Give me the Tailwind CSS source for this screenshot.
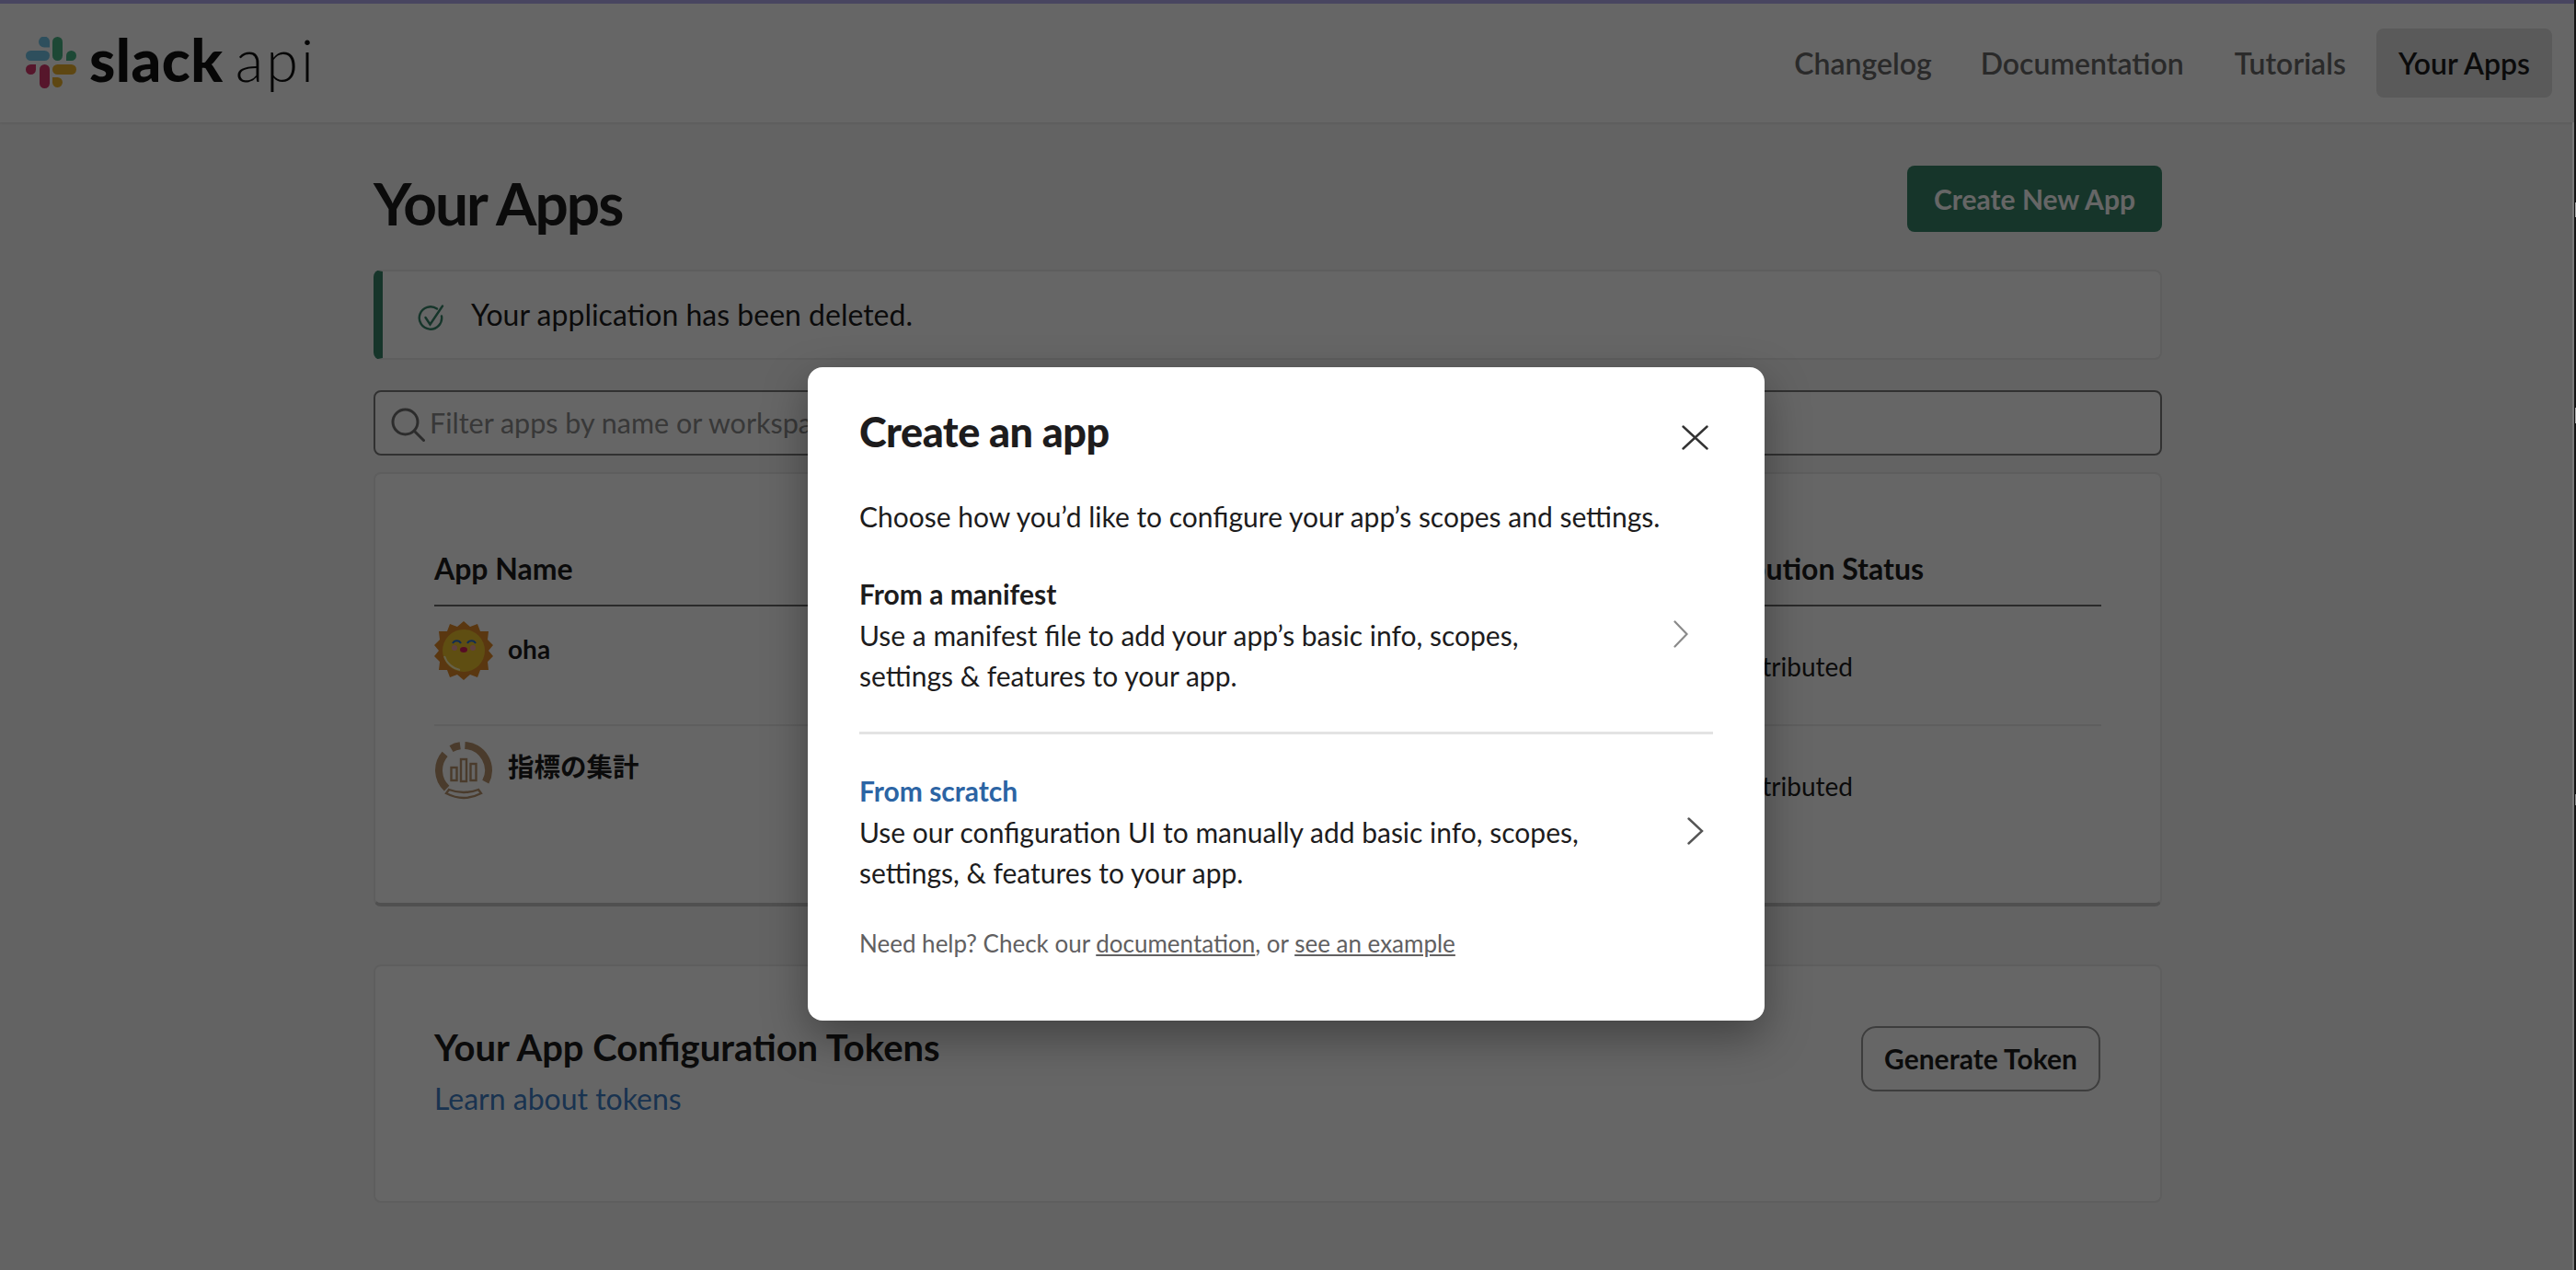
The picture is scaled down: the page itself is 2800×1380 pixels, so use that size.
<!DOCTYPE html>
<html lang="en">
<head>
  <meta charset="UTF-8">
  <title>Slack API: Applications</title>
  <script src="https://cdn.jsdelivr.net/npm/@tailwindcss/browser@4"></script>
</head>
<body class="relative h-[1380px] overflow-hidden bg-[#f8f8f8] font-['Lato','Noto_Sans_CJK_JP',sans-serif] text-[#1d1c1d]">
  <!-- top nav -->
  <header class="h-[133px] bg-white border-t-4 border-[#b5acf0] shadow-[0_1px_3px_rgba(0,0,0,0.12)] flex items-center justify-between pl-[28px] pr-[26px]">
    <a class="flex items-center">
      <svg class="w-[55px] h-[56px] mt-[-2px]" viewBox="0 0 55 56">
        <rect x="0" y="15" width="26" height="11" rx="5.5" fill="#74c6e8"/>
        <path d="M26 11.5V6a6 6 0 1 0-6 5.5z" fill="#74c6e8"/>
        <rect x="29" y="0" width="11" height="26" rx="5.5" fill="#4ab586"/>
        <path d="M44 26v-5.5a5.5 5.5 0 1 1 5.5 5.5z" fill="#4ab586"/>
        <rect x="15" y="30" width="11" height="26" rx="5.5" fill="#d6376c"/>
        <path d="M11 30v5.5A5.5 5.5 0 1 1 5.5 30z" fill="#d6376c"/>
        <rect x="29" y="30" width="26" height="11" rx="5.5" fill="#ecb22e"/>
        <path d="M29 44v6a5.5 5.5 0 1 0 5.5-6z" fill="#ecb22e"/>
      </svg>
      <span class="ml-[14px] text-[64px] leading-none font-black tracking-[0.5px] text-[#111] mt-[-8px]">slack</span>
      <span class="ml-[13px] text-[63px] leading-none font-light tracking-[3px] text-[#111] mt-[-8px]">api</span>
    </a>
    <nav class="flex items-center text-[32px] font-semibold text-[#6a6a6a]">
      <a class="mr-[53px]">Changelog</a>
      <a class="mr-[55px]">Documentation</a>
      <a class="mr-[33px]">Tutorials</a>
      <a class="flex items-center h-[75px] px-[24px] rounded-[8px] bg-[#e0e0e0] text-[#1d1c1d]">Your Apps</a>
    </nav>
  </header>

  <main class="w-[1944px] ml-[406px]">
    <div class="flex justify-between pt-[47px] h-[160px]">
      <h1 class="text-[64px] leading-[80px] mt-[1px] font-bold tracking-[-2px] text-[#1d1c1d]">Your Apps</h1>
      <a class="flex items-center justify-center w-[277px] h-[72px] rounded-[8px] bg-[#378569] text-white text-[30px] font-bold">Create New App</a>
    </div>

    <div class="flex items-center h-[98px] rounded-[8px] border-2 border-[#eaeaea] border-l-[10px] border-l-[#378569] bg-white pl-[38px]">
      <svg class="w-[29px] h-[29px] mt-[6px]" viewBox="0 0 29 29" fill="none" stroke="#378569" stroke-width="2.4" stroke-linecap="round">
        <path d="M26 12.5A12.2 12.2 0 1 1 21 4.5"/>
        <path d="M8.5 14l5 7.5L27 1.5"/>
      </svg>
      <span class="ml-[29px] text-[32px]">Your application has been deleted.</span>
    </div>

    <div class="flex items-center mt-[33px] h-[71px] rounded-[8px] border-2 border-[#7c7c7c] bg-white pl-[17px]">
      <svg class="w-[37px] h-[37px] mt-[4px]" viewBox="0 0 37 37" fill="none" stroke="#6f6f6f" stroke-width="3" stroke-linecap="round">
        <circle cx="15.5" cy="15.5" r="13.5"/>
        <path d="M25.5 25.5L35.5 35.5"/>
      </svg>
      <span class="ml-[5px] text-[30.5px] text-[#8c8c8c]">Filter apps by name or workspace</span>
    </div>

    <section class="mt-[18px] h-[472px] rounded-[8px] border-2 border-b-4 border-[#eaeaea] border-b-[#c9c9c9] bg-white px-[64px]">
      <div class="flex h-[144px] items-end border-b-2 border-[#6a6a6a] pb-[15px] text-[32px] font-bold">
        <div class="w-[1351px]">App Name</div>
        <div>Distribution Status</div>
      </div>
      <div class="flex h-[130px] border-b-2 border-[#ececec] text-[28px]">
        <div class="flex w-[1355px] pt-[16px]">
          <svg class="w-[64px] h-[64px]" viewBox="0 0 64 64">
            <polygon points="32,0 39,6 47,3 50,11 59,11 58,20 64,26 59,32 64,38 58,44 59,53 50,53 47,61 39,58 32,64 25,58 17,61 14,53 5,53 6,44 0,38 5,32 0,26 6,20 5,11 14,11 17,3 25,6" fill="#e08a2a"/>
            <circle cx="32" cy="32" r="23" fill="#eec22e"/>
            <path d="M11 38a22 22 0 0 0 17 15" fill="none" stroke="#fff3b8" stroke-width="2"/>
            <path d="M20 24a5 5 0 0 1 9 0M36 24a5 5 0 0 1 9 0" fill="none" stroke="#2a6fd0" stroke-width="2"/>
            <circle cx="22" cy="29" r="3" fill="#f2a1a1"/>
            <circle cx="42" cy="29" r="3" fill="#f2a1a1"/>
            <ellipse cx="32" cy="31" rx="4" ry="3" fill="#d81e5b"/>
          </svg>
          <span class="ml-[16px] mt-[10px] text-[28px] font-bold leading-[40px]">oha</span>
        </div>
        <div class="pt-[43px] leading-[44px]">Not distributed</div>
      </div>
      <div class="flex h-[130px] text-[28px]">
        <div class="flex w-[1355px] pt-[16px]">
          <svg class="w-[64px] h-[64px]" viewBox="0 0 64 64" fill="none" stroke="#b8956f">
            <path d="M33.4 5A27 27 0 0 1 55.8 44.7M18.5 8.6A27 27 0 0 1 28.2 5.3M11.6 14.3A27 27 0 0 0 13.6 51.7" stroke-width="8"/>
            <rect x="18.5" y="29" width="6" height="14" stroke-width="2.4"/>
            <rect x="29" y="20" width="6" height="24" stroke-width="2.4"/>
            <rect x="39.5" y="25" width="6" height="18" stroke-width="2.4"/>
            <path d="M16 53q16 6 32 0l3 4q-19 10-38 0z" stroke-width="2.4"/>
          </svg>
          <span class="ml-[16px] mt-[8px] text-[28.5px] font-bold leading-[40px]">指標の集計</span>
        </div>
        <div class="pt-[43px] leading-[44px]">Not distributed</div>
      </div>
    </section>

    <section class="flex justify-between mt-[63px] h-[259px] rounded-[8px] border-2 border-[#eaeaea] bg-white pl-[64px] pr-[65px]">
      <div class="pt-[63px]">
        <h2 class="text-[40px] leading-[50px] font-bold">Your App Configuration Tokens</h2>
        <a class="block mt-[9px] text-[32px] leading-[44px] text-[#3f7fc8]">Learn about tokens</a>
      </div>
      <button class="mt-[65px] w-[260px] h-[71px] rounded-[16px] border-2 border-[#9a9a9a] bg-white text-[30px] font-bold">Generate Token</button>
    </section>
  </main>

  <!-- dim layer -->
  <div class="absolute inset-0 bg-black/60"></div>

  <!-- scrollbar sliver on the right edge -->
  <div class="absolute top-[133px] bottom-0 right-[2px] w-[2px] bg-[#777]"></div>
  <div class="absolute top-0 bottom-0 right-0 w-[2px] bg-[#141414]"></div>
  <div class="absolute top-[220px] right-0 w-[1px] h-[16px] bg-[#aaa]"></div>
  <div class="absolute top-[443px] right-0 w-[1px] h-[17px] bg-[#aaa]"></div>
  <div class="absolute top-[863px] right-0 w-[1px] h-[12px] bg-[#888]"></div>

  <!-- modal -->
  <div class="absolute left-[878px] top-[399px] w-[1040px] h-[710px] rounded-[16px] bg-white px-[56px] pt-[40px] shadow-[0_18px_48px_rgba(0,0,0,0.35)]">
    <div class="relative">
      <h2 class="text-[45px] leading-[60px] font-black tracking-[-0.5px]">Create an app</h2>
      <svg class="absolute right-[5px] top-[23px] w-[29px] h-[27px]" viewBox="0 0 29 27" fill="none" stroke="#333" stroke-width="2.4" stroke-linecap="round">
        <path d="M1.5 1.5L27.5 25.5M27.5 1.5L1.5 25.5"/>
      </svg>
    </div>
    <p class="mt-[40px] text-[30px] leading-[44px]">Choose how you’d like to configure your app’s scopes and settings.</p>

    <div class="relative mt-[42px] h-[173px] border-b-[3px] border-[#e3e3e3]">
      <h3 class="text-[30px] leading-[40px] font-bold">From a manifest</h3>
      <p class="mt-[3px] text-[30px] leading-[44px]">Use a manifest file to add your app’s basic info, scopes,<br>settings &amp; features to your app.</p>
      <svg class="absolute left-[885px] top-[49px] w-[16px] h-[30px]" viewBox="0 0 16 30" fill="none" stroke="#8a8a8a" stroke-width="2.2" stroke-linecap="round">
        <path d="M1.5 1.5L14.5 15L1.5 28.5"/>
      </svg>
    </div>

    <div class="relative mt-[41px]">
      <h3 class="text-[30px] leading-[40px] font-bold text-[#2c64a4]">From scratch</h3>
      <p class="mt-[3px] text-[30px] leading-[44px]">Use our configuration UI to manually add basic info, scopes,<br>settings, &amp; features to your app.</p>
      <svg class="absolute left-[900px] top-[49px] w-[18px] h-[30px]" viewBox="0 0 18 30" fill="none" stroke="#555" stroke-width="2.4" stroke-linecap="round">
        <path d="M1.5 1.5L16 15L1.5 28.5"/>
      </svg>
    </div>

    <p class="mt-[37px] text-[26px] leading-[36px] text-[#616061]">Need help? Check our <a class="underline">documentation</a>, or <a class="underline">see an example</a></p>
  </div>
</body>
</html>
